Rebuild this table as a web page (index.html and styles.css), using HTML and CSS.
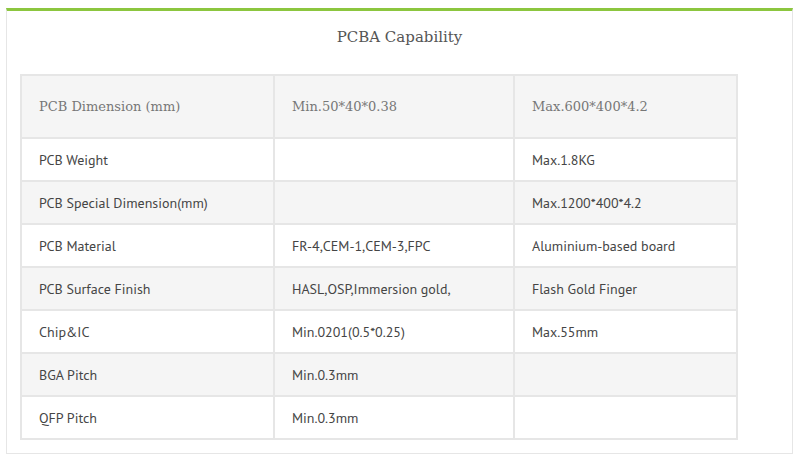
FILE: index.html
```html
<!DOCTYPE html>
<html>
<head>
<meta charset="utf-8">
<link rel="stylesheet" href="styles.css">
</head>
<body>
<div class="panel">
  <h2 class="title">PCBA Capability</h2>
  <table class="cap">
    <tr class="head">
      <td class="c1">PCB Dimension (mm)</td>
      <td class="c2">Min.50*40*0.38</td>
      <td class="c3">Max.600*400*4.2</td>
    </tr>
    <tr><td>PCB Weight</td><td></td><td>Max.1.8KG</td></tr>
    <tr class="alt"><td>PCB Special Dimension(mm)</td><td></td><td>Max.1200*400*4.2</td></tr>
    <tr><td>PCB Material</td><td>FR-4,CEM-1,CEM-3,FPC</td><td>Aluminium-based board</td></tr>
    <tr class="alt"><td>PCB Surface Finish</td><td>HASL,OSP,Immersion gold,</td><td>Flash Gold Finger</td></tr>
    <tr><td>Chip&amp;IC</td><td>Min.0201(0.5*0.25)</td><td>Max.55mm</td></tr>
    <tr class="alt"><td>BGA Pitch</td><td>Min.0.3mm</td><td></td></tr>
    <tr><td>QFP Pitch</td><td>Min.0.3mm</td><td></td></tr>
  </table>
</div>
</body>
</html>
```

FILE: styles.css
```css
html, body {
  margin: 0;
  padding: 0;
  background: #ffffff;
}
body {
  padding: 8px 6px 0 6px;
  font-family: "PT Sans", "Noto Sans", "Open Sans", sans-serif;
}
.panel {
  border: 1px solid #e6e6e6;
  border-top: 3px solid #8cc63f;
  padding: 0 0 0 13px;
  box-sizing: border-box;
  width: 787px;
  height: 446px;
}
.title {
  margin: 0;
  padding: 17px 13px 0 0;
  height: 63px;
  box-sizing: border-box;
  text-align: center;
  font-family: "DejaVu Serif", serif;
  font-weight: normal;
  font-size: 15px;
  color: #555555;
}
.cap {
  border-collapse: collapse;
  width: 718px;
  table-layout: fixed;
}
.cap td {
  border: 2px solid #e6e6e6;
  height: 41px;
  padding: 0 0 0 17px;
  font-size: 14px;
  color: #454545;
  vertical-align: middle;
}
.cap .c1 { width: 234px; }
.cap .c2 { width: 221px; }
.cap tr.head td {
  height: 61px;
  background: #f5f5f5;
  font-family: "DejaVu Serif", serif;
  font-size: 13px;
  color: #777777;
}
.cap tr.alt td {
  background: #f5f5f5;
}
```
